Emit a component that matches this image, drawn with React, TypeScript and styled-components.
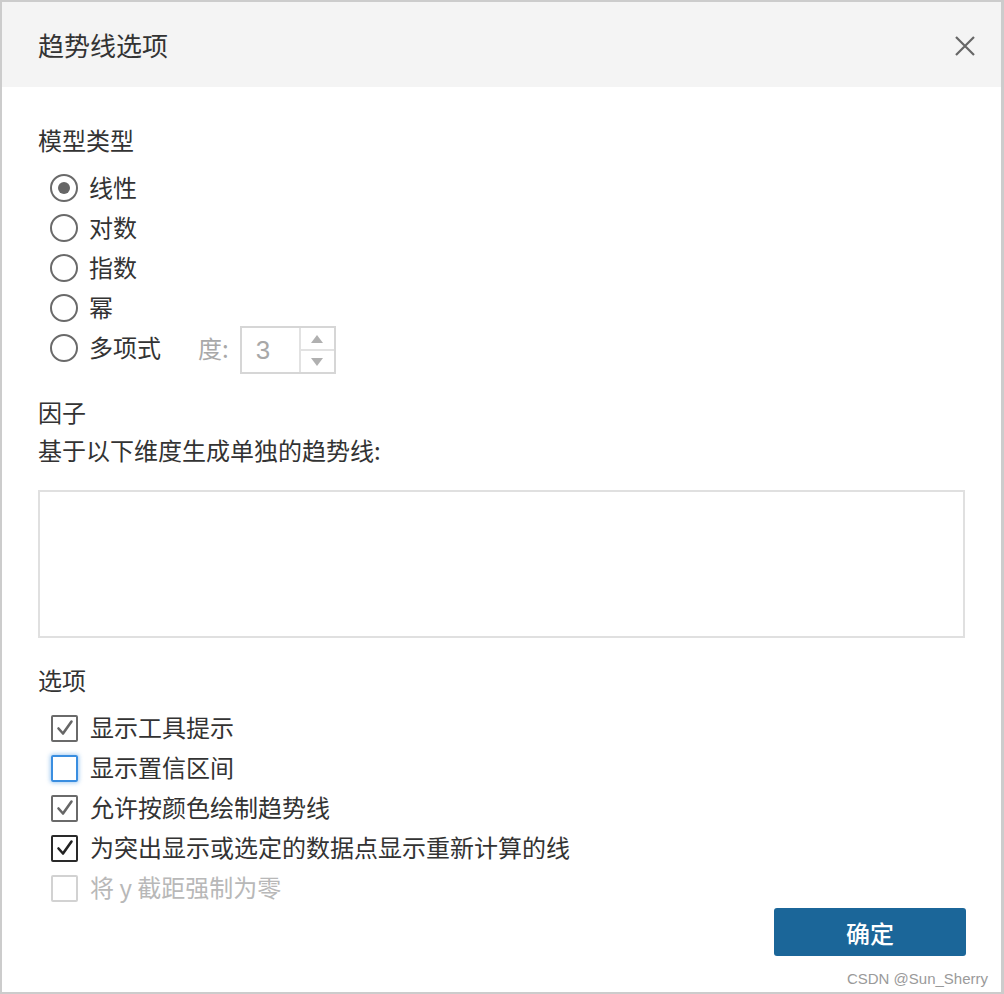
import styled, { createGlobalStyle, css } from 'styled-components';

const GlobalStyle = createGlobalStyle`
    html, body {
        margin: 0;
        padding: 0;
        background: #ffffff;
    }
    body {
        font-family: "Noto Sans CJK SC", "Noto Sans", sans-serif;
        color: #333333;
    }
`;

const models = ['线性', '对数', '指数', '幂', '多项式'];

const options = [
    { label: '显示工具提示', state: 'checked' },
    { label: '显示置信区间', state: 'focus' },
    { label: '允许按颜色绘制趋势线', state: 'checked' },
    { label: '为突出显示或选定的数据点显示重新计算的线', state: 'dark' },
    { label: '将 y 截距强制为零', state: 'disabled' },
] as const;

type BoxState = (typeof options)[number]['state'];

export default function App() {
    return (
        <>
            <GlobalStyle />
            <Dialog>
                <Header>
                    <Title>趋势线选项</Title>
                    <CloseButton>
                        <svg width="22" height="22" viewBox="0 0 22 22">
                            <path d="M2 2 L20 20 M20 2 L2 20" stroke="#666" strokeWidth="2.2" fill="none" />
                        </svg>
                    </CloseButton>
                </Header>
                <Body>
                    <SectionLabel>模型类型</SectionLabel>
                    <RadioGroup>
                        {models.map((m, i) => (
                            <Row key={m}>
                                <Radio checked={i === 0} />
                                <RowText>{m}</RowText>
                                {m === '多项式' && (
                                    <Degree>
                                        <DegreeLabel>度:</DegreeLabel>
                                        <Spinner>
                                            <SpinnerValue>3</SpinnerValue>
                                            <SpinnerArrows>
                                                <Arrow>
                                                    <svg width="12" height="8" viewBox="0 0 12 8"><path d="M0 8 L6 0 L12 8 Z" fill="#b0b0b0" /></svg>
                                                </Arrow>
                                                <Arrow bottom>
                                                    <svg width="12" height="8" viewBox="0 0 12 8"><path d="M0 0 L6 8 L12 0 Z" fill="#b0b0b0" /></svg>
                                                </Arrow>
                                            </SpinnerArrows>
                                        </Spinner>
                                    </Degree>
                                )}
                            </Row>
                        ))}
                    </RadioGroup>
                    <SectionLabel style={{ marginTop: '24px' }}>因子</SectionLabel>
                    <RowText>基于以下维度生成单独的趋势线:</RowText>
                    <FieldBox />
                    <SectionLabel style={{ marginTop: '22px' }}>选项</SectionLabel>
                    <CheckGroup>
                        {options.map((o) => (
                            <Row key={o.label}>
                                <CheckBox state={o.state}>
                                    {o.state !== 'focus' && o.state !== 'disabled' && (
                                        <svg width="22" height="22" viewBox="0 0 22 22">
                                            <path
                                                d="M4.5 11.5 L9 16.5 L17.5 4.5"
                                                stroke={o.state === 'dark' ? '#222' : '#666'}
                                                strokeWidth="2.6"
                                                fill="none"
                                                strokeLinecap="round"
                                                strokeLinejoin="round"
                                            />
                                        </svg>
                                    )}
                                </CheckBox>
                                <RowText muted={o.state === 'disabled'}>{o.label}</RowText>
                            </Row>
                        ))}
                    </CheckGroup>
                    <Footer>
                        <OkButton>确定</OkButton>
                    </Footer>
                </Body>
                <Watermark>CSDN @Sun_Sherry</Watermark>
            </Dialog>
        </>
    );
}

const Dialog = styled.div`
    position: relative;
    box-sizing: border-box;
    width: 1004px;
    height: 994px;
    border: 2px solid #cccccc;
    border-right-width: 3px;
    background: #ffffff;
    display: flex;
    flex-direction: column;
`;

const Header = styled.div`
    height: 85px;
    background: #f4f4f4;
    display: flex;
    align-items: center;
    justify-content: space-between;
    padding: 0 25px 0 36px;
    flex-shrink: 0;
`;

const Title = styled.div`
    font-size: 26px;
    color: #333333;
    line-height: 40px;
`;

const CloseButton = styled.div`
    display: flex;
    align-items: center;
    margin-top: 2px;
`;

const Body = styled.div`
    display: flex;
    flex-direction: column;
    padding: 33px 36px 0 36px;
`;

const SectionLabel = styled.div`
    font-size: 24px;
    line-height: 40px;
    color: #333333;
`;

const RadioGroup = styled.div`
    display: flex;
    flex-direction: column;
    margin-top: 8px;
    padding-left: 12px;
`;

const CheckGroup = styled(RadioGroup)``;

const Row = styled.div`
    display: flex;
    align-items: center;
    height: 40px;
`;

const RowText = styled.div<{ muted?: boolean }>`
    font-size: 24px;
    line-height: 40px;
    margin-top: -2px;
    color: ${(p) => (p.muted ? '#b8b8b8' : '#333333')};
`;

const Radio = styled.div<{ checked: boolean }>`
    box-sizing: border-box;
    width: 28px;
    height: 28px;
    border: 2px solid #6a6a6a;
    border-radius: 50%;
    margin-right: 11px;
    display: flex;
    align-items: center;
    justify-content: center;
    &::after {
        content: '';
        width: 12px;
        height: 12px;
        border-radius: 50%;
        background: #666666;
        display: ${(p) => (p.checked ? 'block' : 'none')};
    }
`;

const Degree = styled.div`
    display: flex;
    align-items: center;
    margin-left: 37px;
`;

const DegreeLabel = styled.span`
    font-size: 24px;
    color: #a8a8a8;
    margin-top: -2px;
    margin-right: 11px;
`;

const Spinner = styled.div`
    box-sizing: border-box;
    width: 96px;
    height: 48px;
    border: 2px solid #d6d6d6;
    display: flex;
    margin-top: 4px;
`;

const SpinnerValue = styled.div`
    flex: 1;
    font-family: "Liberation Sans", Arial, sans-serif;
    font-size: 26px;
    color: #a8a8a8;
    padding-left: 14px;
    display: flex;
    align-items: center;
`;

const SpinnerArrows = styled.div`
    width: 33px;
    border-left: 2px solid #e2e2e2;
    display: flex;
    flex-direction: column;
`;

const Arrow = styled.div<{ bottom?: boolean }>`
    flex: 1;
    display: flex;
    align-items: center;
    justify-content: center;
    ${(p) =>
        p.bottom &&
        css`
            border-top: 2px solid #e2e2e2;
        `}
`;

const FieldBox = styled.div`
    box-sizing: border-box;
    height: 148px;
    margin-top: 20px;
    border: 2px solid #e0e0e0;
`;

const CheckBox = styled.div<{ state: BoxState }>`
    box-sizing: border-box;
    width: 27px;
    height: 27px;
    border-radius: 2px;
    border: 2px solid #6a6a6a;
    margin-right: 12px;
    margin-left: 1px;
    display: flex;
    align-items: center;
    justify-content: center;
    ${(p) =>
        p.state === 'focus' &&
        css`
            border-color: #3a8ee0;
            box-shadow: 0 0 4px 1px rgba(58, 142, 224, 0.45);
        `}
    ${(p) =>
        p.state === 'dark' &&
        css`
            border-color: #2a2a2a;
        `}
    ${(p) =>
        p.state === 'disabled' &&
        css`
            border-color: #d2d2d2;
        `}
`;

const Footer = styled.div`
    display: flex;
    justify-content: flex-end;
    margin-right: -1px;
`;

const OkButton = styled.button`
    width: 192px;
    height: 48px;
    border: none;
    border-radius: 3px;
    background: #1b6699;
    color: #ffffff;
    font-family: "Noto Sans CJK SC", sans-serif;
    font-size: 24px;
    font-weight: 500;
    cursor: pointer;
`;

const Watermark = styled.div`
    position: absolute;
    right: 13px;
    bottom: 5px;
    font-family: "Liberation Sans", Arial, sans-serif;
    font-size: 15px;
    color: #9a9a9a;
`;
